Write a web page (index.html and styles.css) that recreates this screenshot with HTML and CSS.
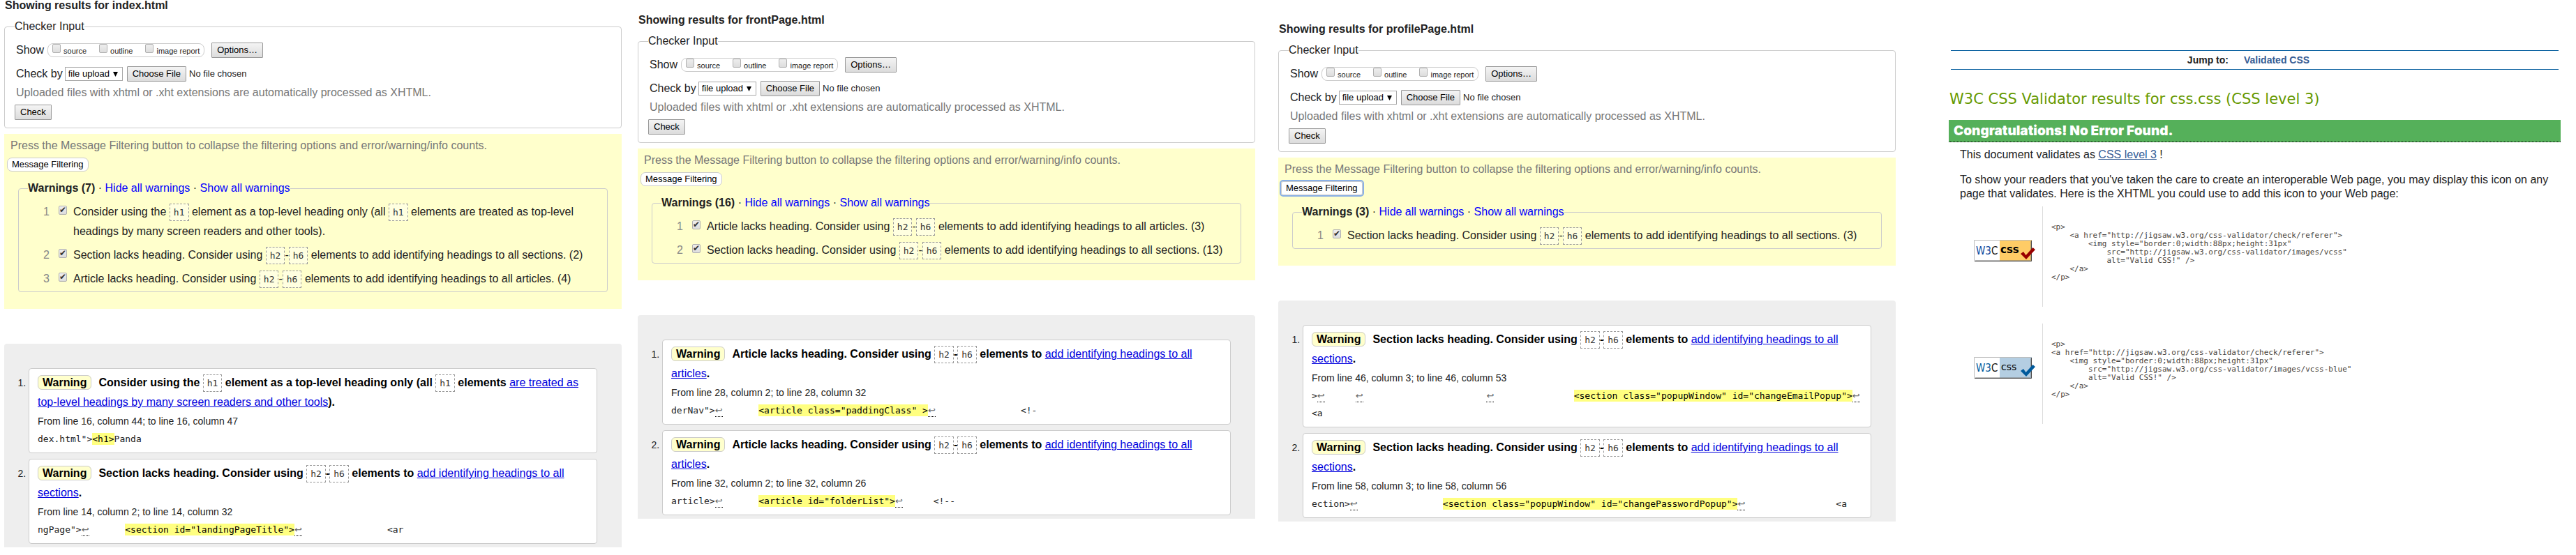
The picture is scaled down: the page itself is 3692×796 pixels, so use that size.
FILE: index.html
```
<!DOCTYPE html>
<html lang="en">
<head>
<meta charset="utf-8">
<title>Validation results</title>
<link rel="stylesheet" href="styles.css">
</head>
<body>
<main class="board">

<section class="panel panel-index">
  <h2 class="title">Showing results for index.html</h2>
  <fieldset class="checker">
    <legend>Checker Input</legend>
    <div class="row">
      <span class="row-label">Show</span>
      <span class="show-box">
        <label class="opt"><input type="checkbox" class="tick">source</label>
        <label class="opt"><input type="checkbox" class="tick">outline</label>
        <label class="opt"><input type="checkbox" class="tick">image report</label>
      </span>
      <button type="button" class="btn btn-options">Options…</button>
    </div>
    <div class="row">
      <label class="row-label" for="by1">Check by</label>
      <select id="by1" class="method"><option>file upload</option></select>
      <input type="file" class="file" aria-label="File to check">
    </div>
    <p class="hint">Uploaded files with xhtml or .xht extensions are automatically processed as XHTML.</p>
    <button type="button" class="btn">Check</button>
  </fieldset>
  <div class="filters">
    <p class="hint">Press the Message Filtering button to collapse the filtering options and error/warning/info counts.</p>
    <button type="button" class="btn-filter">Message Filtering</button>
    <fieldset class="group">
      <legend><b>Warnings (7)</b> · <a href="#">Hide all warnings</a> · <a href="#">Show all warnings</a></legend>
      <div class="item"><span class="num">1</span><input type="checkbox" class="tick" id="w11" checked><label for="w11">Consider using the <code class="el">h1</code> element as a top-level heading only (all <code class="el">h1</code> elements are treated as top-level headings by many screen readers and other tools).</label></div>
      <div class="item"><span class="num">2</span><input type="checkbox" class="tick" id="w12" checked><label for="w12">Section lacks heading. Consider using <code class="el">h2</code>-<code class="el">h6</code> elements to add identifying headings to all sections. (2)</label></div>
      <div class="item"><span class="num">3</span><input type="checkbox" class="tick" id="w13" checked><label for="w13">Article lacks heading. Consider using <code class="el">h2</code>-<code class="el">h6</code> elements to add identifying headings to all articles. (4)</label></div>
    </fieldset>
  </div>
  <ol class="results">
    <li class="card">
      <p class="message"><strong class="badge">Warning</strong>Consider using the <code class="el">h1</code> element as a top-level heading only (all <code class="el">h1</code> elements <a href="#">are treated as top-level headings by many screen readers and other tools</a>).</p>
      <p class="place">From line 16, column 44; to line 16, column 47</p>
      <pre class="extract">dex.html"&gt;<mark>&lt;h1&gt;</mark>Panda</pre>
    </li>
    <li class="card">
      <p class="message"><strong class="badge">Warning</strong>Section lacks heading. Consider using <code class="el">h2</code>-<code class="el">h6</code> elements to <a href="#">add identifying headings to all sections</a>.</p>
      <p class="place">From line 14, column 2; to line 14, column 32</p>
      <pre class="extract">ngPage"&gt;<span class="lf">↩</span>&#9;<mark>&lt;section id="landingPageTitle"&gt;</mark><span class="lf">↩</span>&#9;&#9;&lt;ar</pre>
    </li>
  </ol>
</section>

<section class="panel panel-front">
  <h2 class="title">Showing results for frontPage.html</h2>
  <fieldset class="checker">
    <legend>Checker Input</legend>
    <div class="row">
      <span class="row-label">Show</span>
      <span class="show-box">
        <label class="opt"><input type="checkbox" class="tick">source</label>
        <label class="opt"><input type="checkbox" class="tick">outline</label>
        <label class="opt"><input type="checkbox" class="tick">image report</label>
      </span>
      <button type="button" class="btn btn-options">Options…</button>
    </div>
    <div class="row">
      <label class="row-label" for="by2">Check by</label>
      <select id="by2" class="method"><option>file upload</option></select>
      <input type="file" class="file" aria-label="File to check">
    </div>
    <p class="hint">Uploaded files with xhtml or .xht extensions are automatically processed as XHTML.</p>
    <button type="button" class="btn">Check</button>
  </fieldset>
  <div class="filters">
    <p class="hint">Press the Message Filtering button to collapse the filtering options and error/warning/info counts.</p>
    <button type="button" class="btn-filter">Message Filtering</button>
    <fieldset class="group">
      <legend><b>Warnings (16)</b> · <a href="#">Hide all warnings</a> · <a href="#">Show all warnings</a></legend>
      <div class="item"><span class="num">1</span><input type="checkbox" class="tick" id="w21" checked><label for="w21">Article lacks heading. Consider using <code class="el">h2</code>-<code class="el">h6</code> elements to add identifying headings to all articles. (3)</label></div>
      <div class="item"><span class="num">2</span><input type="checkbox" class="tick" id="w22" checked><label for="w22">Section lacks heading. Consider using <code class="el">h2</code>-<code class="el">h6</code> elements to add identifying headings to all sections. (13)</label></div>
    </fieldset>
  </div>
  <ol class="results">
    <li class="card">
      <p class="message"><strong class="badge">Warning</strong>Article lacks heading. Consider using <code class="el">h2</code>-<code class="el">h6</code> elements to <a href="#">add identifying headings to all articles</a>.</p>
      <p class="place">From line 28, column 2; to line 28, column 32</p>
      <pre class="extract">derNav"&gt;<span class="lf">↩</span>&#9;<mark>&lt;article class="paddingClass" &gt;</mark><span class="lf">↩</span>&#9;&#9;&lt;!-</pre>
    </li>
    <li class="card">
      <p class="message"><strong class="badge">Warning</strong>Article lacks heading. Consider using <code class="el">h2</code>-<code class="el">h6</code> elements to <a href="#">add identifying headings to all articles</a>.</p>
      <p class="place">From line 32, column 2; to line 32, column 26</p>
      <pre class="extract">article&gt;<span class="lf">↩</span>&#9;<mark>&lt;article id="folderList"&gt;</mark><span class="lf">↩</span>&#9;&lt;!--</pre>
    </li>
  </ol>
</section>

<section class="panel panel-profile">
  <h2 class="title">Showing results for profilePage.html</h2>
  <fieldset class="checker">
    <legend>Checker Input</legend>
    <div class="row">
      <span class="row-label">Show</span>
      <span class="show-box">
        <label class="opt"><input type="checkbox" class="tick">source</label>
        <label class="opt"><input type="checkbox" class="tick">outline</label>
        <label class="opt"><input type="checkbox" class="tick">image report</label>
      </span>
      <button type="button" class="btn btn-options">Options…</button>
    </div>
    <div class="row">
      <label class="row-label" for="by3">Check by</label>
      <select id="by3" class="method"><option>file upload</option></select>
      <input type="file" class="file" aria-label="File to check">
    </div>
    <p class="hint">Uploaded files with xhtml or .xht extensions are automatically processed as XHTML.</p>
    <button type="button" class="btn">Check</button>
  </fieldset>
  <div class="filters">
    <p class="hint">Press the Message Filtering button to collapse the filtering options and error/warning/info counts.</p>
    <button type="button" class="btn-filter is-focused">Message Filtering</button>
    <fieldset class="group">
      <legend><b>Warnings (3)</b> · <a href="#">Hide all warnings</a> · <a href="#">Show all warnings</a></legend>
      <div class="item"><span class="num">1</span><input type="checkbox" class="tick" id="w31" checked><label for="w31">Section lacks heading. Consider using <code class="el">h2</code>-<code class="el">h6</code> elements to add identifying headings to all sections. (3)</label></div>
    </fieldset>
  </div>
  <ol class="results">
    <li class="card">
      <p class="message"><strong class="badge">Warning</strong>Section lacks heading. Consider using <code class="el">h2</code>-<code class="el">h6</code> elements to <a href="#">add identifying headings to all sections</a>.</p>
      <p class="place">From line 46, column 3; to line 46, column 53</p>
      <pre class="extract">&gt;<span class="lf">↩</span>&#9;<span class="lf">↩</span>&#9;&#9;&#9;<span class="lf">↩</span>&#9;&#9;<mark>&lt;section class="popupWindow" id="changeEmailPopup"&gt;</mark><span class="lf">↩</span><br>&lt;a</pre>
    </li>
    <li class="card">
      <p class="message"><strong class="badge">Warning</strong>Section lacks heading. Consider using <code class="el">h2</code>-<code class="el">h6</code> elements to <a href="#">add identifying headings to all sections</a>.</p>
      <p class="place">From line 58, column 3; to line 58, column 56</p>
      <pre class="extract">ection&gt;<span class="lf">↩</span>&#9;&#9;<mark>&lt;section class="popupWindow" id="changePasswordPopup"&gt;</mark><span class="lf">↩</span>&#9;&#9;&#9;&lt;a</pre>
    </li>
  </ol>
</section>

<section class="panel panel-css">
  <nav class="jump"><b>Jump to:</b><a href="#">Validated CSS</a></nav>
  <h2 class="css-title">W3C CSS Validator results for css.css (CSS level 3)</h2>
  <h3 class="congrats">Congratulations! No Error Found.</h3>
  <div class="css-body">
    <p>This document validates as <a href="#">CSS level 3</a> !</p>
    <p>To show your readers that you've taken the care to create an interoperable Web page, you may display this icon on any page that validates. Here is the XHTML you could use to add this icon to your Web page:</p>
  </div>
  <div class="snippets">
    <div class="snippet">
      <svg class="w3c" width="88" height="31" viewBox="0 0 88 31" role="img" aria-label="Valid CSS!">
        <rect width="83" height="31" fill="#fff"/>
        <rect x="37" width="46" height="31" fill="#fc6"/>
        <path d="M.5 30V.5H82" fill="none" stroke="#bbb"/>
        <path d="M1 30.5H82.5V1" fill="none" stroke="#444"/>
        <path d="M2 29.5H81.5V2" fill="none" stroke="#777" stroke-opacity=".5"/>
        <text x="3" y="21" class="w3c-mark" fill="#0c479d">W3<tspan fill="#111">C</tspan></text>
        <text x="38" y="19" class="css-bold">css</text>
        <path d="M67 20l4-3 3.500 5 10-11 3.500 3L75 28z" fill="#900"/>
      </svg>
      <pre class="markup">&lt;p&gt;
    &lt;a href="http://jigsaw.w3.org/css-validator/check/referer"&gt;
        &lt;img style="border:0;width:88px;height:31px"
            src="http://jigsaw.w3.org/css-validator/images/vcss"
            alt="Valid CSS!" /&gt;
    &lt;/a&gt;
&lt;/p&gt;</pre>
    </div>
    <div class="snippet">
      <svg class="w3c" width="88" height="31" viewBox="0 0 88 31" role="img" aria-label="Valid CSS!">
        <rect width="83" height="31" fill="#fff"/>
        <rect x="37" width="46" height="31" fill="#b4cee2"/>
        <path d="M.5 30V.5H82" fill="none" stroke="#bbb"/>
        <path d="M1 30.500H82.500V1" fill="none" stroke="#444"/>
        <path d="M2 29.500H81.500V2" fill="none" stroke="#777" stroke-opacity=".5"/>
        <text x="3" y="21" class="w3c-mark" fill="#005a9c">W3<tspan fill="#111">C</tspan></text>
        <text x="39" y="19" class="css-plain">css</text>
        <path d="M67 20l4-3 3.500 5 10-11 3.500 3L75 28z" fill="#005a9c"/>
      </svg>
      <pre class="markup">&lt;p&gt;
&lt;a href="http://jigsaw.w3.org/css-validator/check/referer"&gt;
    &lt;img style="border:0;width:88px;height:31px"
        src="http://jigsaw.w3.org/css-validator/images/vcss-blue"
        alt="Valid CSS!" /&gt;
    &lt;/a&gt;
&lt;/p&gt;</pre>
    </div>
  </div>
</section>

</main>
</body>
</html>
```
FILE: styles.css
```
* { box-sizing: border-box; }
body {
  margin: 0;
  background: #fff;
  color: #222;
  font: 16px/20px "Liberation Sans", Arial, sans-serif;
}
p, h2, h3, ol, pre, fieldset { margin: 0; padding: 0; }
button, select, input { font: 13px/16px "Liberation Sans", Arial, sans-serif; color: #000; margin: 0; }

.board { display: flex; align-items: flex-start; padding: 0 22px 0 6px; }
.panel { flex: 885 1 0; min-width: 0; }
.panel-front { margin-left: 23px; padding-top: 21px; }
.panel-profile { margin-left: 33px; padding-top: 34px; }
.panel-css { flex-grow: 877; margin-left: 76px; padding-top: 72px; }

.title { font-size: 16px; line-height: 16px; margin: 0 0 13px 1px; }

/* Checker form */
.checker {
  border: 1px solid #ccc;
  border-radius: 4px;
  padding: 14px 14px 11px;
}
legend { padding: 0; line-height: 18px; }
.row { display: flex; align-items: center; height: 22px; margin-bottom: 12px; }
.row-label { margin-left: 2px; }
.show-box {
  display: flex;
  gap: 18px;
  height: 20px;
  margin-left: 5px;
  padding: 0 6px;
  border: 1px solid #ccc;
  border-radius: 8px;
}
.opt { display: flex; gap: 4px; font-size: 11px; line-height: 20px; }
.method {
  appearance: none;
  width: 83px;
  height: 20px;
  margin-left: 3px;
  padding: 0 4px;
  border: 1px solid #a9a9a9;
  border-radius: 0;
  background: #fff url("data:image/svg+xml,%3Csvg xmlns='http://www.w3.org/2000/svg' width='7' height='7'%3E%3Cpath d='M0 0h7L3.500 7z'/%3E%3C/svg%3E") no-repeat right 6px center;
}
.file { width: 240px; margin-left: 6px; color: #222; }
.btn, .file::file-selector-button {
  height: 22px;
  padding: 1px 7px;
  border: 1px solid #999;
  border-radius: 1px;
  background: linear-gradient(#f4f4f4, #dcdcdc);
  color: #000;
  font: 13px/16px "Liberation Sans", Arial, sans-serif;
}
.btn { display: block; }
.btn-options { margin-left: 10px; }
.hint { color: #777; }
.checker .hint { margin: -6px 0 7px 2px; }

.tick {
  appearance: none;
  flex: none;
  position: relative;
  width: 12px;
  height: 13px;
  border: 1px solid #b0b0b0;
  border-radius: 2px;
  background: linear-gradient(#eee, #ddd);
}
.tick:checked::after {
  content: "✔";
  position: absolute;
  left: 0;
  top: -2px;
  color: #333;
  font: 12px/14px "DejaVu Sans", sans-serif;
}

/* Message filters */
.filters { margin-top: 8px; padding: 7px 20px 24px; background: #ffc; }
.filters .hint { margin: 0 0 7px -11px; }
.btn-filter {
  display: block;
  height: 20px;
  margin: 0 0 15px -16px;
  padding: 0 6px;
  border: 1px solid #ccc;
  border-radius: 7px;
  background: #fff;
}
.is-focused { outline: 2px solid #8ab0e6; outline-offset: 0; border-radius: 3px; }
.group { border: 1px solid #ccc; border-radius: 4px; padding: 11px 13px 4px; }
.group a { color: #00f; text-decoration: none; }
.item { display: flex; margin-left: 22px; line-height: 28px; }
.item + .item { margin-top: 6px; }
.num { flex: none; width: 22px; color: #888; }
.item .tick { margin: 5px 9px 0 0; }
.el {
  padding: 4px 5px;
  border: 1px dashed #999;
  background: rgba(255, 255, 255, .4);
  color: #333;
  font: 13px/16px "DejaVu Sans Mono", monospace;
}

/* Results list */
.results {
  margin-top: 50px;
  padding: 35px 35px 5px;
  border-radius: 4px 4px 0 0;
  background: #eee;
  color: #222;
  font-size: 14px;
}
.card {
  padding: 6px 12px 7px;
  border: 1px solid #ccc;
  border-radius: 4px;
  background: #fff;
}
.card + .card { margin-top: 8px; }
.message { color: #000; font-size: 16px; line-height: 28px; font-weight: bold; }
.message a { color: #00d; font-weight: normal; }
.badge {
  margin-right: 10px;
  padding: 1px 6px;
  border: 1px solid #ccc;
  border-radius: 6px;
  background: #ffc;
}
.place { line-height: 26px; }
.extract {
  font: 13px/25px "DejaVu Sans Mono", monospace;
  tab-size: 8;
  white-space: pre-wrap;
}
mark { padding: 1px 0; background: #ffff80; color: #000; }
.lf {
  padding-bottom: 1px;
  border-bottom: 1px dotted #000;
  color: #666;
  font: 13px/16px "DejaVu Sans", sans-serif;
}

/* CSS validator */
.jump {
  display: flex;
  justify-content: center;
  gap: 22px;
  margin: 0 3px;
  padding-right: 18px;
  border: solid #005a9c;
  border-width: 1px 0;
  font-size: 14px;
  font-weight: bold;
  line-height: 26px;
}
.jump a { color: #365d95; text-decoration: none; }
.css-title {
  margin: 28px 0 16px 1px;
  color: #690;
  font: 21px/28px "DejaVu Sans", Verdana, sans-serif;
}
.congrats {
  padding: 0 7px;
  border-bottom: 1px dotted #000;
  background: #55b05a;
  color: #fff;
  font: 900 19px/31px Inter, sans-serif;
}
.css-body { padding: 8px 16px 0; }
.css-body p + p { margin-top: 16px; }
.css-body a { color: #365d95; }
.snippets { display: grid; gap: 24px; padding: 8px 0 0 36px; }
.snippet { display: grid; grid-template-columns: 98px 1fr; align-items: start; }
.w3c { margin-top: 48px; }
.w3c-mark { font: 15px "Liberation Sans Narrow", "DejaVu Sans Condensed", sans-serif; }
.css-bold { font: bold 15px "DejaVu Sans", sans-serif; }
.css-plain { font: 14px "DejaVu Sans", sans-serif; }
.markup {
  padding: 24px 0 36px 12px;
  border-left: 1px solid #ddd;
  color: #444;
  font: 11px/12px "DejaVu Sans Mono", monospace;
}
```
